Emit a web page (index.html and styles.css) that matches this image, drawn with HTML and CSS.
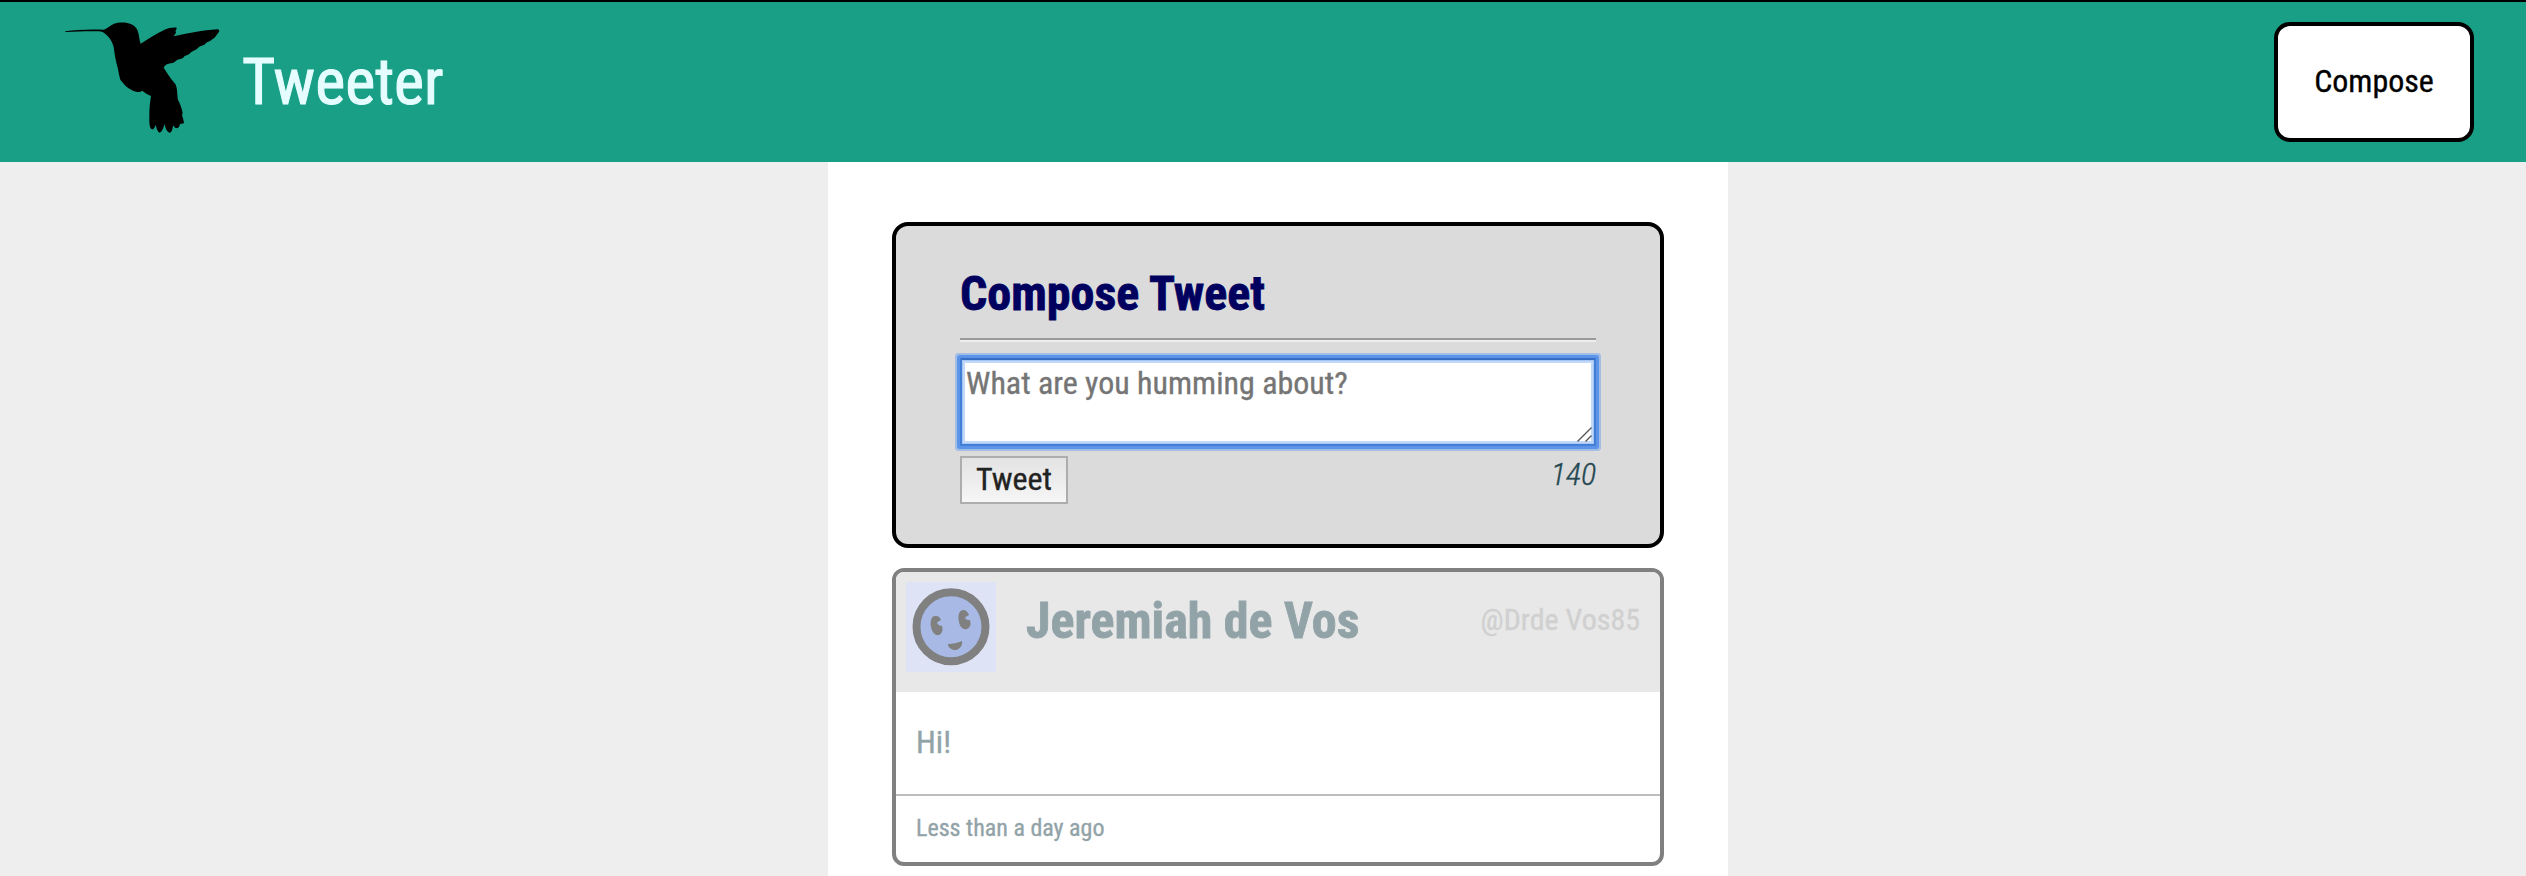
FILE: index.html
```
<!DOCTYPE html>
<html lang="en">
<head>
<meta charset="utf-8">
<title>Tweeter</title>
<link rel="stylesheet" href="styles.css">
</head>
<body>
<header class="nav">
  <svg class="logo" viewBox="72 60 474 345" aria-hidden="true">
    <path d="M75 94C110 89 150 87 191 89C201 86 208 77 222 71C236 66 257 66 270 71C285 77 291 84 294 95C298 108 298 120 302 131C325 117 350 99 374 89C386 84 400 81 410 83C411 89 404 91 408 97C406 103 405 104 400 109C442 101 490 90 532 88C540 89 539 95 534 100C528 106 526 115 515 119C508 126 500 124 495 133C486 139 480 137 473 145C466 153 456 152 450 160C444 167 435 165 430 173C422 179 415 176 407 183C402 190 393 189 386 191C378 192 374 197 371 203C382 220 393 238 406 252C413 264 411 285 414 300C421 312 425 325 428 339C424 345 428 350 430 358L432 370C427 372 423 370 420 372C419 380 415 386 407 384C403 382 402 376 399 377C398 386 395 399 388 398C381 395 376 386 374 372C371 379 368 395 359 398C352 396 349 382 347 375C344 382 342 390 335 388C327 384 328 360 328 345C328 325 330 305 333 288C325 283 313 279 307 272C302 276 295 277 288 275C268 270 251 253 241 239C236 225 236 212 231 196C226 177 223 158 221 141C216 121 204 107 189 97C185 94 180 94 172 94C140 93 110 95 77 96Z"/>
  </svg>
  <h1 class="brand">Tweeter</h1>
  <button class="compose-button" type="button">Compose</button>
</header>
<main class="container">
  <section class="new-tweet">
    <h2 class="new-tweet-title">Compose Tweet</h2>
    <div class="rule"></div>
    <div class="field">
      <span class="placeholder">What are you humming about?</span>
      <svg class="grip" viewBox="0 0 15 15" aria-hidden="true"><path d="M.5 14.5L14.5 .5M8.5 14.5L14.5 8.5"/></svg>
    </div>
    <div class="actions">
      <button class="submit" type="button">Tweet</button>
      <span class="counter">140</span>
    </div>
  </section>
  <article class="tweet">
    <header class="tweet-header">
      <svg class="avatar" viewBox="0 0 90 90" aria-hidden="true">
        <rect width="90" height="90" fill="#dfe3f6"/>
        <circle cx="45" cy="44.7" r="34.5" fill="#a7b9e4" stroke="#808080" stroke-width="8"/>
        <path d="M30 34C25 33 24 40 25 45C26 50 29 54 33 53C37 51 37 47 36 44C34 44 32 43 31 41C32 39 34 39 35 38C34 36 33 34 30 34Z" fill="#808080"/>
        <path d="M57 28C52 29 52 35 53 40C54 45 57 48 61 47C65 45 65 42 64 38C62 38 60 38 59 36C60 34 62 34 63 33C62 30 60 28 57 28Z" fill="#808080"/>
        <path d="M42 62C46 62 52 61 56 59C57 63 54 67 50 68C46 68 42 66 42 62Z" fill="#808080"/>
      </svg>
      <h2 class="author">Jeremiah de Vos</h2>
      <span class="handle">@Drde Vos85</span>
    </header>
    <p class="tweet-body">Hi!</p>
    <footer class="tweet-footer">Less than a day ago</footer>
  </article>
</main>
</body>
</html>
```
FILE: styles.css
```
* { box-sizing: border-box; }
html, body { height: 100%; }
body {
  margin: 0;
  overflow: hidden;
  background: #eee;
  color: #244751;
  font-family: "Roboto Condensed", Roboto, sans-serif;
  font-stretch: 75%;
  font-size: 32px;
  -webkit-text-stroke: .35px currentColor;
  display: flex;
  flex-direction: column;
}
h1, h2, p { margin: 0; }
button { font: inherit; font-stretch: 75%; }
.nav {
  flex: none;
  height: 162px;
  padding: 0 52px 0 64px;
  border-top: 2px solid #000;
  background: #1a9f87;
  display: flex;
  align-items: center;
}
.logo { width: 158px; height: 115px; margin-bottom: 9px; }
.brand {
  margin-left: 20px;
  font-size: 64px;
  font-weight: 400;
  color: #e6fdff;
  -webkit-text-stroke-width: 1px;
}
.compose-button {
  margin-left: auto;
  width: 200px;
  height: 120px;
  padding: 0 0 3px;
  border: 4px solid #000;
  border-radius: 16px;
  background: #fff;
  color: #000;
}
.container {
  flex: 1 0 auto;
  width: 900px;
  margin-left: 828px;
  padding: 60px 64px 0;
  background: #fff;
}
.new-tweet {
  height: 326px;
  padding: 40px 64px 0;
  border: 4px solid #000;
  border-radius: 16px;
  background: #dbdbdb;
}
.new-tweet-title {
  font-size: 48px;
  line-height: 56px;
  font-weight: 700;
  color: #00005f;
  -webkit-text-stroke-width: .8px;
}
.rule { height: 4px; margin: 16px 0; border-top: 2px solid #9a9a9a; border-bottom: 2px solid #eee; }
.field {
  position: relative;
  height: 88px;
  padding: 4px;
  border: 2px solid #427ed3;
  border-top-color: #356dc4;
  background: #fff;
  box-shadow: 0 0 0 3px #5b94e9, 0 0 0 5px #a3bee5, inset 0 0 0 1px #a5c6f5, inset 0 0 0 3px #c2d8f9;
  border-radius: 1px;
}
.placeholder { display: block; line-height: 38px; color: #757575; }
.grip { position: absolute; right: 2px; bottom: 2px; width: 15px; height: 15px; fill: none; stroke: #555; stroke-width: 1.4; }
.actions { display: flex; justify-content: space-between; align-items: flex-start; margin-top: 10px; }
.submit {
  width: 108px;
  height: 48px;
  padding: 0 0 3px;
  border: 2px solid #adadad;
  background: linear-gradient(#e3e3e3, #f6f6f6);
  color: #222;
}
.counter { line-height: 37px; font-style: italic; font-weight: 300; }
.tweet {
  height: 298px;
  margin-top: 20px;
  border: 4px solid #808080;
  border-radius: 12px;
  background: #fff;
  color: #92a3a8;
  overflow: hidden;
}
.tweet-header {
  height: 120px;
  padding: 10px 20px 0 10px;
  background: #e8e8e8;
  display: flex;
  align-items: flex-start;
}
.avatar { width: 90px; height: 90px; }
.author {
  margin-left: 30px;
  font-size: 50px;
  line-height: 78px;
  font-weight: 700;
  -webkit-text-stroke-width: .8px;
}
.handle { margin-left: auto; font-size: 30px; line-height: 75px; color: #d0d0d0; }
.tweet-body { height: 104px; padding-left: 20px; line-height: 101px; border-bottom: 2px solid #bdbdbd; }
.tweet-footer { padding-left: 20px; font-size: 24px; line-height: 64px; }
```
